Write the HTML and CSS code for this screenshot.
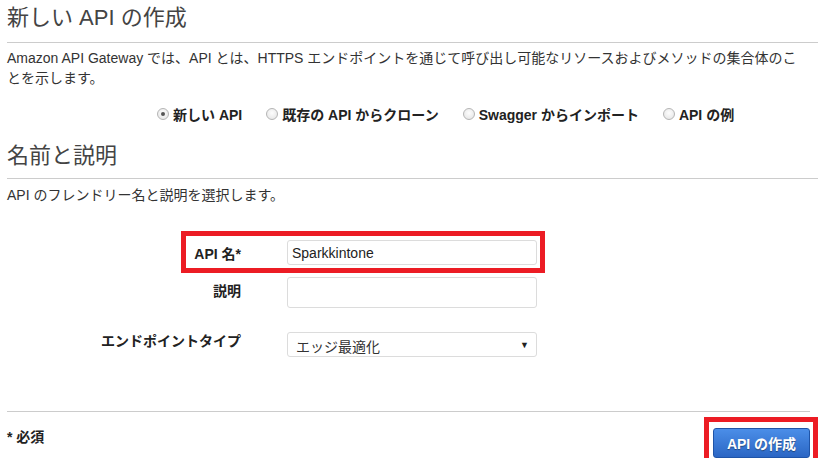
FILE: index.html
```html
<!DOCTYPE html>
<html lang="ja">
<head>
<meta charset="utf-8">
<link rel="stylesheet" href="styles.css">
</head>
<body>
<div class="page">
  <h1 class="title">新しい API の作成</h1>
  <p class="desc">Amazon API Gateway では、API とは、HTTPS エンドポイントを通じて呼び出し可能なリソースおよびメソッドの集合体のことを示します。</p>
  <div class="radios">
    <label class="radio"><span class="dot checked"></span>新しい API</label>
    <label class="radio"><span class="dot"></span>既存の API からクローン</label>
    <label class="radio"><span class="dot"></span>Swagger からインポート</label>
    <label class="radio"><span class="dot"></span>API の例</label>
  </div>
  <h2 class="title sub">名前と説明</h2>
  <p class="desc short">API のフレンドリー名と説明を選択します。</p>
  <div class="form">
    <div class="row row-name">
      <span class="label">API 名*</span>
      <div class="field input">Sparkkintone</div>
      <span class="annot annot-name"></span>
    </div>
    <div class="row row-desc">
      <span class="label">説明</span>
      <div class="field input tall"></div>
    </div>
    <div class="row row-type">
      <span class="label top-type">エンドポイントタイプ</span>
      <div class="field select"><span>エッジ最適化</span><span class="arrow">▼</span></div>
    </div>
  </div>
  <div class="footer">
    <span class="req">* 必須</span>
    <div class="btn-wrap">
      <button class="btn">API の作成</button>
      <span class="annot annot-btn"></span>
    </div>
  </div>
</div>
</body>
</html>
```
FILE: styles.css
```css
html, body { margin: 0; padding: 0; background: #fff; }
body {
  font-family: "Liberation Sans", Arial, "Noto Sans CJK JP", sans-serif;
  color: #444;
  overflow: hidden;
}
.page { padding: 0 0 0 7px; width: 811px; }
.title {
  margin: 0;
  padding: 4px 0 10px;
  font-size: 22px;
  line-height: 28px;
  font-weight: normal;
  color: #444;
  border-bottom: 1px solid #cccccc;
}
.sub { margin-top: 18px; padding-top: 0; padding-bottom: 8px; }
.desc {
  margin: 5px 0 0;
  font-size: 14px;
  line-height: 20px;
  color: #333;
  padding-right: 14px;
}
.desc.short { margin-top: 6px; }
.radios {
  display: flex;
  gap: 24px;
  margin: 16px 0 0 150px;
  height: 20px;
  align-items: center;
}
.radio {
  display: flex;
  align-items: center;
  gap: 4px;
  font-size: 14px;
  font-weight: bold;
  color: #222;
}
.dot {
  width: 10px;
  height: 10px;
  border-radius: 50%;
  border: 1px solid #b5b5b5;
  background: radial-gradient(circle at 50% 40%, #fdfdfd 0%, #e2e2e2 100%);
  display: inline-flex;
  align-items: center;
  justify-content: center;
}
.dot.checked::after {
  content: "";
  width: 4px;
  height: 4px;
  border-radius: 50%;
  background: #555;
}
.form { margin-top: 35px; }
.row {
  position: relative;
  display: grid;
  grid-template-columns: 234px 250px;
  column-gap: 46px;
  align-items: start;
}
.row-desc { margin-top: 12px; }
.row-type { margin-top: 24px; }
.label {
  text-align: right;
  font-size: 14px;
  line-height: 16px;
  margin-top: 6px;
  font-weight: bold;
  color: #222;
}
.label.top-type { margin-top: 1px; }
.field {
  box-sizing: border-box;
  height: 25px;
  border: 1px solid #dcdcdc;
  border-radius: 3px;
  background: #fff;
  font-size: 14px;
  color: #222;
  display: flex;
  align-items: center;
  padding: 0 4px;
}
.field.tall { height: 31px; }
.select {
  justify-content: space-between;
  padding: 0 7px 0 8px;
  font-size: 14px;
  color: #333;
}
.select span:first-child { padding-top: 3px; }
.arrow { font-size: 9px; color: #222; }
.annot {
  position: absolute;
  box-sizing: border-box;
  border: 5px solid #ec1c24;
  pointer-events: none;
}
.annot-name { left: 174px; top: -9px; width: 364px; height: 42px; }
.footer {
  margin-top: 54px;
  border-top: 1px solid #cccccc;
  margin-right: 1px;
  display: flex;
  justify-content: space-between;
  align-items: flex-start;
  width: 803px;
}
.req {
  margin-top: 14px;
  font-size: 14px;
  font-weight: bold;
  color: #222;
}
.btn-wrap { position: relative; margin-top: 16px; margin-right: -8px; width: 105px; }
.btn {
  box-sizing: border-box;
  width: 97px;
  height: 30px;
  border: 1px solid #1f54a8;
  border-radius: 3px;
  background: linear-gradient(#4b8ee8, #2b66c4);
  color: #fff;
  font-family: "Liberation Sans", Arial, "Noto Sans CJK JP", sans-serif;
  font-size: 14px;
  font-weight: bold;
  text-shadow: 0 1px 1px rgba(0,0,0,0.4);
  padding: 0;
}
.annot-btn { left: -9px; top: -11px; width: 114px; height: 70px; }
```
